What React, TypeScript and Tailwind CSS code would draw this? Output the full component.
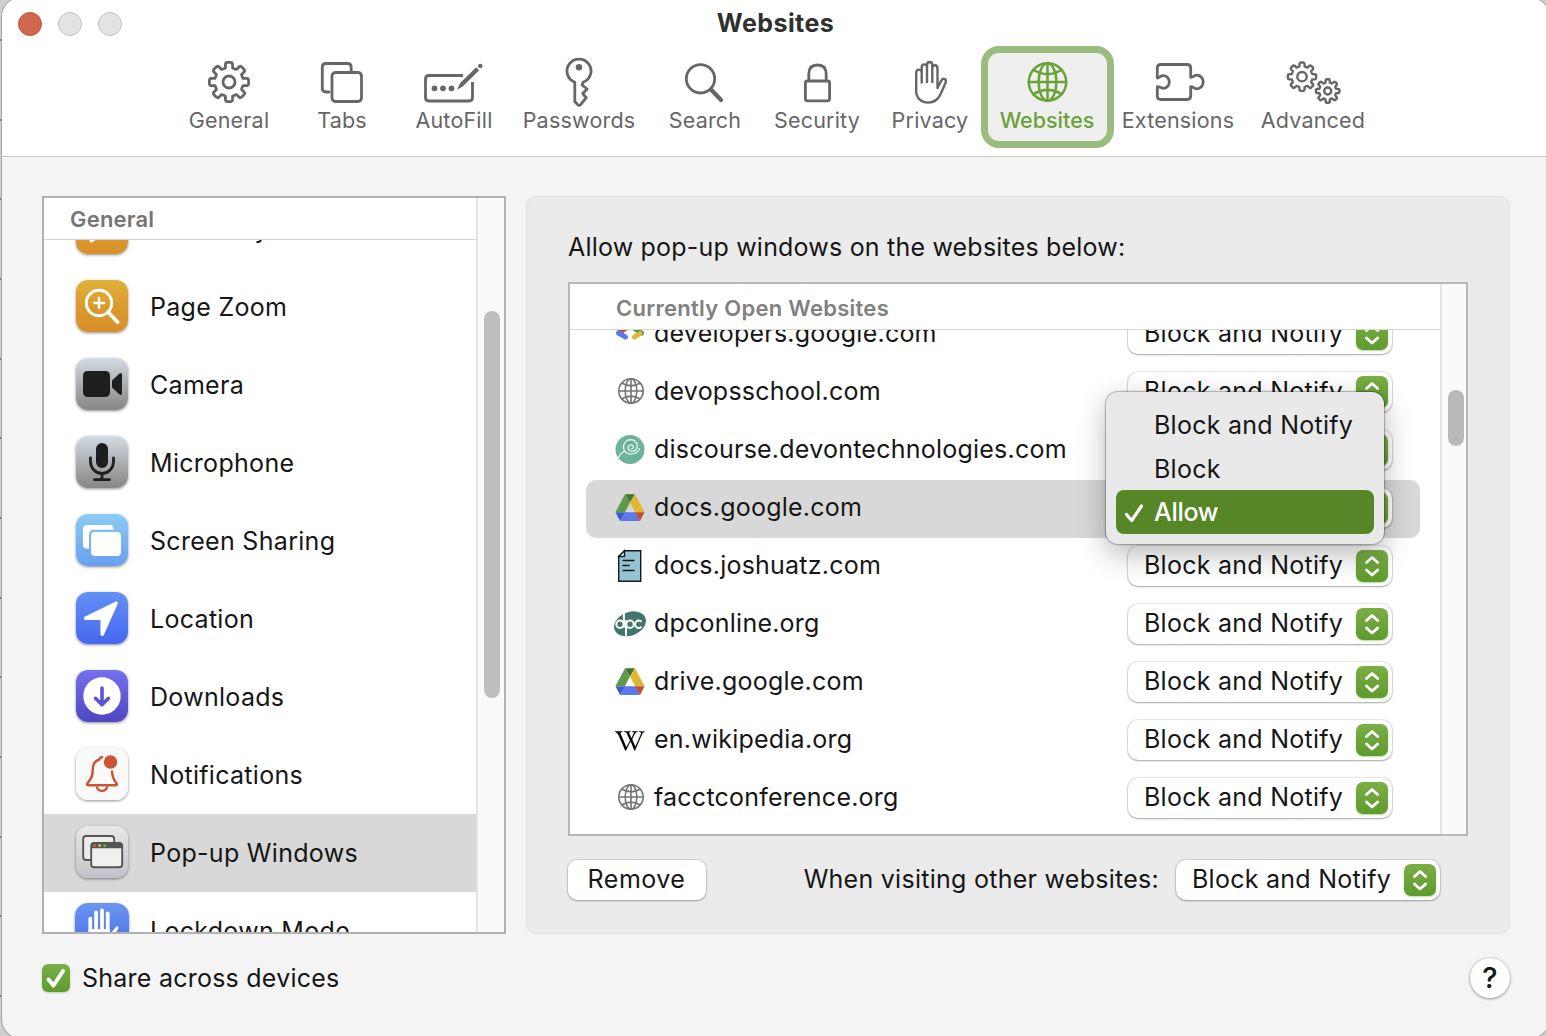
import React from "react";
import { FaWikipediaW } from "react-icons/fa";

type Kids = { children: React.ReactNode };

function gearPath(cx: number, cy: number, outer: number, root: number) {
  const p = (r: number, a: number) =>
    `${(cx + r * Math.sin(a)).toFixed(2)} ${(cy - r * Math.cos(a)).toFixed(2)}`;
  let d = "";
  for (let i = 0; i < 8; i++) {
    const a = (i * Math.PI) / 4;
    d += `${i ? "L" : "M"}${p(root, a - 0.25)}L${p(outer - 1, a - 0.19)}Q${p(outer, a - 0.17)} ${p(outer, a - 0.1)}`;
    d += `L${p(outer, a + 0.1)}Q${p(outer, a + 0.17)} ${p(outer - 1, a + 0.19)}L${p(root, a + 0.25)}`;
    d += `Q${p(root - 0.6, a + Math.PI / 8)} ${p(root, a + Math.PI / 4 - 0.25)}`;
  }
  return d + "Z";
}

function Globe({ cx, cy, r }: { cx: number; cy: number; r: number }) {
  const k = r / 19;
  return (
    <>
      <circle cx={cx} cy={cy} r={r} />
      <ellipse cx={cx} cy={cy} rx={9 * k} ry={r} />
      <path
        d={`M${cx} ${cy - r}V${cy + r}M${cx - r} ${cy}H${cx + r}M${cx - 14.5 * k} ${cy - 12.5 * k}Q${cx} ${cy - 3.5 * k} ${cx + 14.5 * k} ${cy - 12.5 * k}M${cx - 14.5 * k} ${cy + 12.5 * k}Q${cx} ${cy + 3.5 * k} ${cx + 14.5 * k} ${cy + 12.5 * k}`}
      />
    </>
  );
}

function Tool({ label, width, center, active, children }: Kids & { label: string; width: string; center: number; active?: boolean }) {
  return (
    <button className={`relative flex h-[88px] flex-col items-center ${width} ${active ? "text-[#6ba238]" : "text-[#666666]"}`}>
      {active && <span className="absolute -inset-x-[6.5px] -top-[6px] -bottom-[8px] rounded-[18px] border-[7px] border-[#9abd7f] bg-[#efefef]" />}
      <svg
        className="relative mt-px h-[54px] w-[64px]"
        viewBox={`${center - 32} 53 64 54`}
        fill="none"
        stroke="currentColor"
        strokeWidth="2.8"
        strokeLinecap="round"
        strokeLinejoin="round"
      >
        {children}
      </svg>
      <span className={`relative text-[21.5px] leading-[26px] whitespace-nowrap ${active ? "font-medium tracking-normal" : "tracking-[0.2px]"}`}>{label}</span>
    </button>
  );
}

function Toolbar() {
  return (
    <nav className="flex pt-[7px] pl-[171px]">
      <Tool label="General" width="w-[112px]" center={230}>
        <path d={gearPath(230, 82, 19.7, 14.6)} />
        <circle cx="230" cy="82" r="6" />
      </Tool>
      <Tool label="Tabs" width="w-[114px]" center={342}>
        <path d="M329 92h-3q-3.7 0-3.7-3.7V67.200q0-3.700 3.700-3.700h21.500q3.700 0 3.700 3.700V71" />
        <rect x="332" y="72.500" width="29.500" height="29" rx="3.500" />
      </Tool>
      <Tool label="AutoFill" width="w-[110px]" center={454}>
        <path d="M463 75.500H429q-3.500 0-3.500 3.500v18.500q0 3.500 3.500 3.500h40q3.500 0 3.500-3.500V82" strokeLinecap="butt" />
        <g fill="currentColor" stroke="none">
          <circle cx="434.500" cy="88.300" r="2.900" />
          <circle cx="443" cy="88.300" r="2.900" />
          <circle cx="451.500" cy="88.300" r="2.900" />
          <path d="M457 89.700l3.200-6.700 16-15.700 3 3-16.200 15.900z" />
          <circle cx="480.300" cy="66" r="2.200" />
        </g>
      </Tool>
      <Tool label="Passwords" width="w-[140px]" center={579}>
        <path d="M574.800 82.300A12 12 0 1 1 583.200 82.300L582 85l5.200 4-4.600 4.500 3.700 4.200-5.700 7q-1.400 1.400-2.800 0l-3-3.200z" />
        <circle cx="579" cy="67.300" r="3.200" fill="currentColor" stroke="none" />
      </Tool>
      <Tool label="Search" width="w-[112px]" center={705}>
        <circle cx="700.500" cy="78.800" r="14.200" />
        <path d="M711.500 90l9.500 10" strokeWidth="4.200" />
      </Tool>
      <Tool label="Security" width="w-[112px]" center={817}>
        <rect x="805.400" y="81" width="24.200" height="19.800" rx="2" />
        <path d="M808.800 80v-6c0-6.500 3.700-9 8.700-9s8.700 2.500 8.700 9v6" />
      </Tool>
      <Tool label="Privacy" width="w-[114px]" center={930}>
        <path
          d="M921.700 82.500V73c0-4.500-5.500-4.500-5.500 0v18c0 7.500 5.500 11.600 12 11.600 6 0 9.700-2.600 12.200-8l5.200-11.800c1.400-4-2.500-5.300-4.300-2.200l-3.800 7.400V68.500c0-4.400-5.200-4.400-5.200 0V82M921.700 74v-6.500c0-4.200 5.300-4.200 5.300 0V82M927 68v-3c0-4 5.300-4 5.300 0v5"
          strokeWidth="2.400"
        />
      </Tool>
      <Tool label="Websites" width="w-[120px]" center={1048} active>
        <g strokeWidth="2.500">
          <Globe cx={1048.500} cy={82} r={18.700} />
        </g>
      </Tool>
      <Tool label="Extensions" width="w-[142px]" center={1178}>
        <path d="M1157.300 78V68q0-3.500 3.500-3.500h26.400q3.500 0 3.500 3.500v9.300c2.500.5 3-2.100 6.300-2.100a6.200 6.800 0 0 1 0 13.600c-3.300 0-3.800-2.600-6.300-2.100V96q0 3.500-3.500 3.500h-26.400q-3.500 0-3.500-3.500V86.700c2.300-.5 3 1.600 6 1.600a6 6.300 0 0 0 0-12.600c-3 0-3.700 2.100-6 2.300z" />
      </Tool>
      <Tool label="Advanced" width="w-[128px]" center={1313}>
        <g strokeWidth="2.400">
          <path d={gearPath(1302, 76.700, 14.200, 10.700)} />
          <circle cx="1302" cy="76.700" r="4.700" />
          <path d={gearPath(1327.700, 91, 11.800, 8.800)} />
          <circle cx="1327.700" cy="91" r="3.500" />
        </g>
      </Tool>
    </nav>
  );
}

function SideItem({ label, tile, big, selected, children }: Kids & { label: string; tile: string; big?: boolean; selected?: boolean }) {
  return (
    <div className={`flex h-[78px] shrink-0 items-center ${big ? "pl-[31px]" : "pl-8"} ${selected ? "bg-[#d8d8d8]" : ""}`}>
      <div
        className={`relative -top-px shrink-0 bg-gradient-to-b shadow-[0_1px_3px_rgba(0,0,0,0.45)] ${big ? "mr-[21px] size-[54px] rounded-[13px]" : "mr-[22px] size-[52px] rounded-[12px]"} ${tile}`}
      >
        <svg className="size-full" viewBox="0 0 52 52" fill="none" strokeLinecap="round" strokeLinejoin="round">
          {children}
        </svg>
      </div>
      <span className="relative top-px text-[25px] tracking-[0.3px] whitespace-nowrap">{label}</span>
    </div>
  );
}

function Sidebar() {
  const amber = "from-[#deb33a] via-[#db9a2e] to-[#d8902a]";
  const steel = "from-[#d3dce4] via-[#acafb2] to-[#868686]";
  return (
    <div className="flex w-[464px] border-2 border-[#b1b1b1] bg-white">
      <div className="flex w-[432px] flex-col overflow-hidden">
        <div className="flex h-[42px] shrink-0 items-center border-b border-[#d2d2d2] pt-px pl-[26px] text-[22px] font-semibold tracking-[0.2px] text-[#757575]">
          General
        </div>
        <div className="flex min-h-0 flex-1 flex-col overflow-hidden">
          <div className="-mt-[50px] flex flex-col">
            <SideItem label="Auto-Play" tile={amber}>
              <path d="M15 13v26l21-12z" fill="white" stroke="white" strokeWidth="3" />
            </SideItem>
            <SideItem label="Page Zoom" tile={amber}>
              <g stroke="white">
                <circle cx="23" cy="23" r="12.700" strokeWidth="3" />
                <path d="M32.500 32.500L41.500 42" strokeWidth="3.800" />
                <path d="M23 18v10M18 23h10" strokeWidth="2.400" />
              </g>
            </SideItem>
            <SideItem label="Camera" tile={steel}>
              <rect x="7" y="13" width="27" height="26" rx="4.500" fill="#1e1e1e" />
              <path d="M36 22.500l7.300-6.800q2.700-1.700 2.700 1.300v18q0 3-2.700 1.300L36 29.500z" fill="#1e1e1e" />
            </SideItem>
            <SideItem label="Microphone" tile={steel}>
              <rect x="20" y="7" width="12" height="25" rx="6" fill="#1e1e1e" />
              <path d="M14.500 22v3.500a11.500 12 0 0 0 23 0V22M26 38v5M18.500 43.700h15" stroke="#1e1e1e" strokeWidth="2.800" />
            </SideItem>
            <SideItem label="Screen Sharing" tile="from-[#8ccbf5] to-[#6a9fee]">
              <path d="M10.500 34.500q-3.500 0-3.500-4V15q0-4 4-4h23q3.500 0 3.800 4.800H18q-5 0-5 5v13.700z" fill="white" />
              <rect x="15" y="18" width="30" height="24" rx="4" fill="white" />
            </SideItem>
            <SideItem label="Location" tile="from-[#6390f3] to-[#4866f0]">
              <path d="M9.500 26.300L40 11.200L26.200 42.200V26.300z" fill="white" stroke="white" strokeWidth="3.500" />
            </SideItem>
            <SideItem label="Downloads" tile="from-[#7670ef] to-[#4f46c0]">
              <circle cx="26" cy="26" r="18.700" fill="white" />
              <path d="M26 18v16.500M19.500 28.300l6.500 6.500 6.500-6.500" stroke="#5c54d0" strokeWidth="3.600" />
            </SideItem>
            <SideItem label="Notifications" tile="from-[#f9f9f9] to-[#fafafa]">
              <path
                d="M27 9.300q-2.800-.5-3.700 2.200c-5 1.500-6.500 5-6.600 10.200-.1 6-1 8.500-5 13.300-1 1.400-.6 2.300 1 2.300h26.600c1.600 0 2-.9 1-2.300-2.600-3-4.200-5.600-4.300-12.500"
                stroke="#cc5336"
                strokeWidth="2.500"
                strokeLinecap="butt"
              />
              <path d="M21 38.500a5 4.400 0 0 0 10 0" stroke="#cc5336" strokeWidth="2.400" strokeLinecap="butt" />
              <circle cx="34.500" cy="14" r="6.700" fill="#cc5336" />
            </SideItem>
            <SideItem label="Pop-up Windows" tile="from-[#e8e8e9] to-[#c3c2c8]" selected>
              <rect x="7.200" y="10" width="31" height="24" rx="3" fill="#ececec" stroke="#555753" strokeWidth="1.900" />
              <rect x="15.200" y="17" width="31" height="24.300" rx="3" fill="#f0f0f0" stroke="#555753" strokeWidth="1.900" />
              <path d="M15.200 22.200V19q0-2.500 2.500-2.500h26q2.500 0 2.500 2.500v3.200z" fill="#555753" />
              <circle cx="18.700" cy="19.500" r="1.500" fill="#d95f4a" />
              <circle cx="23.700" cy="19.500" r="1.500" fill="#e9bd3c" />
              <circle cx="28.700" cy="19.500" r="1.500" fill="#62b743" />
            </SideItem>
            <SideItem label="Lockdown Mode" tile="from-[#6d95ef] to-[#3f66ec]" big>
              <path d="M14.700 15v16M20.300 9v19M26 7v21M31.500 10v20" stroke="white" strokeWidth="3.600" />
              <path d="M13 25h20.500v5l6.500-7.500q2.500 0 1.500 2.500l-7 12q-3 6-10 6-11.500-1-11.500-12z" fill="white" />
            </SideItem>
          </div>
        </div>
      </div>
      <div className="flex w-[28px] justify-center border-l-2 border-[#e4e4e4] bg-[#fafafa] pt-[113px] pl-px">
        <div className="h-[387px] w-4 rounded-full bg-[#bebebe]" />
      </div>
    </div>
  );
}

function Select() {
  return (
    <div className="relative flex h-10 w-[264px] shrink-0 items-center justify-between rounded-[10px] bg-white pr-1 pl-4 shadow-[0_0_1px_1px_rgba(0,0,0,0.1),0_1px_2px_rgba(0,0,0,0.28)]">
      <span className="relative -top-[0.500px] text-[25px] tracking-[0.260px] whitespace-nowrap">Block and Notify</span>
      <svg className="size-8 rounded-[7px] bg-gradient-to-b from-[#7aaf46] to-[#5f9a2c] shadow-[0_1px_2px_rgba(95,154,44,0.4)]" viewBox="0 0 32 32" fill="none" stroke="white" strokeWidth="2.800" strokeLinecap="round" strokeLinejoin="round">
        <path d="M10.500 12.500l5.600-5 5.600 5M10.500 20l5.600 5 5.600-5" />
      </svg>
    </div>
  );
}

const GlobeFav = () => (
  <g stroke="#747474" strokeWidth="1.600">
    <Globe cx={17} cy={15} r={12.200} />
  </g>
);

const DriveFav = () => (
  <g>
    <path d="M11 2.300h10L16 10.500z" fill="#3f7433" />
    <path d="M11 2.300L1.500 20h9.500L16 10.500z" fill="#5f994b" />
    <path d="M21 2.300L30.500 20H21L16 10.500z" fill="#e2b535" />
    <path d="M10.500 20.200h11L26 29H6z" fill="#5b79ea" />
    <path d="M1.500 20.200h9.500L6 29z" fill="#3f5bc6" />
    <path d="M30.500 20.200H21L26 29z" fill="#c04f2d" />
  </g>
);

const sites: { host: string; icon: React.ReactNode; selected?: boolean }[] = [
  {
    host: "developers.google.com",
    icon: (
      <g strokeWidth="5" strokeLinecap="round">
        <path d="M12 10l-7 5" stroke="#c8502f" />
        <path d="M4.500 15L11.500 19" stroke="#5b79ea" />
        <path d="M20 10l7.500 5" stroke="#4d9350" />
        <path d="M26 15.500L20.500 19" stroke="#e2b535" />
      </g>
    ),
  },
  { host: "devopsschool.com", icon: <GlobeFav /> },
  {
    host: "discourse.devontechnologies.com",
    icon: (
      <g transform="translate(0 -1)">
        <circle cx="16" cy="16.500" r="14.500" fill="#6db39b" />
        <path d="M4.500 25c1-3.500 3-5.500 6.500-7M17.500 15c0 1.200 2 .6 1.900-1.200-.2-3-5.400-2.600-5.200 1.300.3 5 9.400 4.300 9-2.600-.4-7.800-13.500-8-13.700 1.500-.2 9.500 15 9 16 1" stroke="#e6f5ef" strokeWidth="1.300" />
      </g>
    ),
  },
  { host: "docs.google.com", icon: <DriveFav />, selected: true },
  {
    host: "docs.joshuatz.com",
    icon: (
      <g stroke="#15191b" strokeWidth="1.400">
        <path d="M4.700 6.500L10.500.7H26.700V31.300H4.700z" fill="#97c2d1" />
        <path d="M4.700 6.500L10.500.7v5.800z" fill="white" />
        <path d="M8.500 10.500h12M8.500 15.500h7M8.500 20.500h12" />
      </g>
    ),
  },
  {
    host: "dpconline.org",
    icon: (
      <g transform="translate(0 -0.7)">
        <ellipse cx="16" cy="16.500" rx="16.500" ry="11.700" transform="rotate(-22 16 16.500)" fill="#43766a" />
        <g stroke="white" strokeWidth="2">
          <circle cx="6" cy="17" r="3.700" />
          <path d="M9.900 5v15.500M12 13v15.500" />
          <circle cx="16" cy="17" r="3.700" />
          <path d="M27.500 14.500a3.700 3.700 0 1 0 0 5" />
        </g>
      </g>
    ),
  },
  { host: "drive.google.com", icon: <DriveFav /> },
  { host: "en.wikipedia.org", icon: <FaWikipediaW x={1} y={2} size={30} stroke="none" color="#000" /> },
  { host: "facctconference.org", icon: <GlobeFav /> },
];

function Menu() {
  return (
    <div className="absolute top-[108px] left-[536px] z-10 h-[152px] w-[278px] rounded-[12px] bg-[#e9e9e9] p-[10px] text-[25px] shadow-[0_0_0_1px_rgba(0,0,0,0.16),0_0_3px_rgba(0,0,0,0.3),0_10px_30px_rgba(0,0,0,0.28)]">
      <div className="flex h-11 items-center pt-[3px] pl-[38px] tracking-[0.260px]">Block and Notify</div>
      <div className="flex h-11 items-center pt-[3px] pl-[38px] tracking-[0.260px]">Block</div>
      <div className="flex h-11 items-center rounded-[8px] bg-[#568626] pt-[2px] pl-2 font-medium tracking-[-0.300px] text-white">
        <svg className="mr-[10px] h-5 w-5" viewBox="0 0 20 20" fill="none" stroke="white" strokeWidth="3.200" strokeLinecap="round" strokeLinejoin="round">
          <path d="M2.500 11.500l5.200 6L17.500 3" />
        </svg>
        Allow
      </div>
    </div>
  );
}

function SiteTable() {
  return (
    <div className="relative mt-[18px] flex h-[554px] border-2 border-[#b7b7b7] bg-white">
      <div className="flex w-[870px] flex-col overflow-hidden">
        <div className="flex h-[46px] shrink-0 items-center border-b border-[#d6d6d6] pt-1 pl-[46px] text-[22px] font-semibold tracking-[0.270px] text-[#808080]">
          Currently Open Websites
        </div>
        <div className="flex min-h-0 flex-1 flex-col overflow-hidden px-4">
          <div className="-mt-[24px] flex w-[834px] flex-col">
            {sites.map((s) => (
              <div key={s.host} className={`flex h-[58px] shrink-0 items-center rounded-[10px] pb-[2px] pl-[28px] pr-[28px] ${s.selected ? "bg-[#d8d8d8]" : ""}`}>
                <svg className="size-8 shrink-0 overflow-visible" viewBox="0 0 32 32" fill="none">
                  {s.icon}
                </svg>
                <span className="flex-1 pl-2 text-[25px] tracking-[0.230px] whitespace-nowrap">{s.host}</span>
                <Select />
              </div>
            ))}
          </div>
        </div>
      </div>
      <div className="flex w-[26px] justify-end border-l-2 border-[#e4e4e4] bg-[#fafafa] pt-[106px] pr-[2px]">
        <div className="h-14 w-4 rounded-full bg-[#b9b9b9]" />
      </div>
      <Menu />
    </div>
  );
}

export default function App() {
  return (
    <div className="flex h-[1036px] w-[1546px] overflow-hidden bg-[#cfcfcf] font-['Inter',sans-serif] text-[#161616]">
      <div className="flex h-full w-[2px] shrink-0 flex-col justify-around">
        {[0, 1, 2, 3, 4, 5, 6, 7, 8, 9, 10, 11, 12].map((i) => (
          <span key={i} className="h-[2px] w-px bg-[#777777]" />
        ))}
      </div>
      <div className="-mt-[2px] flex h-[1040px] w-[1547px] shrink-0 flex-col overflow-hidden rounded-[19px] bg-[#f4f4f4] shadow-[0_0_0_1px_#a5a5a5]">
        <header className="relative h-[159px] shrink-0 border-b border-[#c9c9c9] bg-white pt-[2px]">
          <div className="flex h-[45px] items-center">
            <div className="flex w-[160px] gap-4 pt-[3px] pl-4">
              <span className="size-6 rounded-full border border-[#b9573e] bg-[#d1674d]" />
              <span className="size-6 rounded-full border border-[#c3c3c3] bg-[#e3e3e3]" />
              <span className="size-6 rounded-full border border-[#c3c3c3] bg-[#e3e3e3]" />
            </div>
            <h1 className="flex-1 pt-[2px] pr-[160px] text-center text-[25px] font-bold tracking-[0.450px] text-[#303030]">Websites</h1>
          </div>
          <Toolbar />
        </header>
        <main className="flex h-[777px] shrink-0 gap-5 pt-[39px] pl-10">
          <Sidebar />
          <section className="flex w-[984px] flex-col rounded-[10px] border border-[#e0e0e0] bg-[#ebebeb] px-[41px] pt-[34px]">
            <h2 className="h-[33px] text-[25px] leading-[32px] tracking-[0.200px]">Allow pop-up windows on the websites below:</h2>
            <SiteTable />
            <div className="mt-6 flex items-center pr-[28px]">
              <button className="h-10 w-[138px] rounded-[9px] bg-white pr-px pb-px text-[25px] tracking-[0.500px] shadow-[0_0_1px_1px_rgba(0,0,0,0.1),0_1px_2px_rgba(0,0,0,0.28)]">
                Remove
              </button>
              <span className="relative -top-[0.500px] mr-[17px] ml-auto text-[25px] tracking-[0.270px]">When visiting other websites:</span>
              <Select />
            </div>
          </section>
        </main>
        <footer className="flex h-[88px] items-center pr-[39px] pl-10">
          <svg className="size-7 rounded-[6px] bg-gradient-to-b from-[#7aaf46] to-[#5f9a2c] shadow-[0_1px_2px_rgba(95,154,44,0.4)]" viewBox="0 0 28 28" fill="none" stroke="white" strokeWidth="4" strokeLinecap="round" strokeLinejoin="round">
            <path d="M6.500 15.500l5 6L21 7" />
          </svg>
          <span className="ml-[12px] pt-[2px] text-[25px] tracking-[0.240px]">Share across devices</span>
          <button className="ml-auto size-10 rounded-full bg-white text-[29px] leading-10 font-medium shadow-[0_0_1px_1px_rgba(0,0,0,0.09),0_1px_3px_rgba(0,0,0,0.35)]">?</button>
        </footer>
      </div>
    </div>
  );
}
